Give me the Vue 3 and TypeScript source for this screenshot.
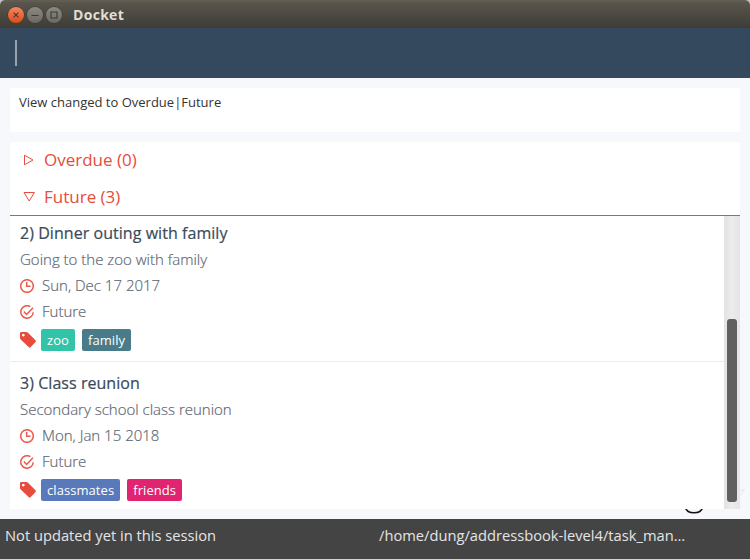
<script setup lang="ts">
interface Tag {
  name: string
  tone: string
}

interface Task {
  index: number
  title: string
  description: string
  date: string
  status: string
  tags: Tag[]
}

const tasks: Task[] = [
  {
    index: 2,
    title: 'Dinner outing with family',
    description: 'Going to the zoo with family',
    date: 'Sun, Dec 17 2017',
    status: 'Future',
    tags: [
      { name: 'zoo', tone: 'teal' },
      { name: 'family', tone: 'slate' },
    ],
  },
  {
    index: 3,
    title: 'Class reunion',
    description: 'Secondary school class reunion',
    date: 'Mon, Jan 15 2018',
    status: 'Future',
    tags: [
      { name: 'classmates', tone: 'blue' },
      { name: 'friends', tone: 'pink' },
    ],
  },
]
</script>

<template>
  <div class="window">
    <header class="titlebar">
      <span class="control close">
        <svg viewBox="0 0 16 16"><path d="M5.6 5.6l4.8 4.8M10.4 5.6l-4.8 4.8" /></svg>
      </span>
      <span class="control">
        <svg viewBox="0 0 16 16"><path d="M4.5 8.5h7" /></svg>
      </span>
      <span class="control">
        <svg viewBox="0 0 16 16"><path d="M5 5h6v6h-6z" /></svg>
      </span>
      <span class="name">Docket</span>
    </header>

    <div class="command"><span class="caret"></span></div>

    <main class="content">
      <svg class="backdrop" viewBox="0 0 65 39">
        <path class="loop" d="M5.5 27.500C7 34.500 21 34.500 22.500 27.500" />
        <path class="leaf" d="M55 11L64.500 9.500L61 14.500L56 15" />
      </svg>

      <section class="message">View changed to Overdue|Future</section>

      <section class="panel">
        <div class="group">
          <svg class="arrow" viewBox="0 0 12 12"><path d="M1.5 1.2v9.600L10 6z" /></svg>
          <span class="overdue">Overdue (0)</span>
        </div>
        <div class="group open">
          <svg class="arrow" viewBox="0 0 12 12"><path d="M1 1.5h10.400L6.200 10z" /></svg>
          <span class="future">Future (3)</span>
        </div>
        <div class="viewport">
          <div class="list">
            <article v-for="task in tasks" :key="task.index" class="task">
              <h2 class="title">{{ task.index }}) {{ task.title }}</h2>
              <p class="line">{{ task.description }}</p>
              <p class="line detail">
                <svg class="icon" viewBox="0 0 14 14">
                  <circle cx="7" cy="7" r="6.3" />
                  <path d="M6.7 3v4.300h3.800" />
                </svg>
                {{ task.date }}
              </p>
              <p class="line detail">
                <svg class="icon" viewBox="0 0 14 14">
                  <path d="M10.300 1.700A6.200 6.200 0 1 0 13.200 7.200M3.800 6.500l2.800 2.900L13 2.700" />
                </svg>
                {{ task.status }}
              </p>
              <div class="tags">
                <svg class="tag-icon" viewBox="0 0 16 16">
                  <path
                    fill-rule="evenodd"
                    d="M0 1.2Q0 0 1.200 0H6.200Q7.200 0 8 .8L15.500 8.300Q16.300 9.100 15.500 9.900L10.500 15.300Q9.700 16.100 8.900 15.300L1 7.800Q0 6.900 0 6zM3.300 1.700a1.400 1.400 0 1 0 .01 0z"
                  />
                </svg>
                <span v-for="tag in task.tags" :key="tag.name" class="tag" :class="tag.tone">{{ tag.name }}</span>
              </div>
            </article>
          </div>
          <div class="track"><div class="thumb"></div></div>
        </div>
      </section>
    </main>

    <footer class="status">
      <span class="sync">Not updated yet in this session</span>
      <span class="path">/home/dung/addressbook-level4/task_man...</span>
    </footer>
  </div>
</template>

<style>
body {
  margin: 0;
  background: #c4c4c4;
  overflow: hidden;
}
</style>

<style scoped>
.window {
  display: flex;
  flex-direction: column;
  width: 750px;
  height: 559px;
  overflow: hidden;
  border-radius: 5px 5px 0 0;
  background: #f7f8fb;
  font-family: 'Open Sans', 'Noto Sans', sans-serif;
  font-size: 16px;
}
.titlebar {
  box-sizing: border-box;
  flex: none;
  display: flex;
  align-items: center;
  gap: 3px;
  height: 28px;
  padding: 1px 8px 0 7.5px;
  background: linear-gradient(#5a564d 0, #68645a 1px, #5a564d 2px, #3d3c37 28px);
}
.control {
  width: 16px;
  height: 16px;
  border-radius: 50%;
  background: linear-gradient(#8c8981, #6b6962);
  box-shadow: 0 0 0 0.5px #35342f;
}
.control.close {
  background: linear-gradient(#f58660, #df4a17);
}
.control svg {
  display: block;
  width: 16px;
  height: 16px;
  fill: none;
  stroke: #3b3a35;
  stroke-width: 1.1;
}
.name {
  margin-left: 8.5px;
  color: #e1ddd4;
  font-size: 14px;
  font-weight: 700;
  letter-spacing: 0.3px;
  line-height: 20px;
}
.command {
  box-sizing: border-box;
  flex: none;
  height: 50px;
  padding: 12px 15px;
  background: #34495e;
}
.caret {
  display: block;
  width: 2px;
  height: 26px;
  background: #97a2ad;
}
.content {
  position: relative;
  box-sizing: border-box;
  flex: none;
  display: flex;
  flex-direction: column;
  gap: 10px;
  height: 441px;
  padding: 10px;
}
.message {
  box-sizing: border-box;
  height: 44px;
  padding: 5px 9px;
  border-radius: 3px;
  background: #fff;
  color: #333;
  font-size: 13px;
  line-height: 19px;
}
.panel {
  position: relative;
  display: flex;
  flex-direction: column;
  height: 367px;
  border-radius: 3px 3px 0 0;
  background: #fff;
}
.group {
  box-sizing: border-box;
  flex: none;
  display: flex;
  align-items: center;
  gap: 9px;
  height: 36px;
  padding-left: 13px;
  color: #e74c3c;
  font-size: 17px;
  line-height: 24px;
}
.group.open {
  height: 38px;
  border-bottom: 1px solid #e74c3c;
}
.arrow {
  width: 12px;
  height: 12px;
  fill: none;
  stroke: #e74c3c;
  stroke-width: 1;
}
.viewport {
  flex: 1;
  display: flex;
  min-height: 0;
  overflow: hidden;
}
.list {
  flex: 1;
}
.task {
  box-sizing: border-box;
  height: 146px;
  padding: 4px 10px 0;
  border-bottom: 1px solid #ebedef;
}
.task + .task {
  padding-top: 8px;
  border-bottom: 0;
}
.title {
  margin: 0;
  color: #3b4a59;
  font-size: 16px;
  font-weight: 400;
  letter-spacing: 0.05px;
  line-height: 26px;
  -webkit-text-stroke: 0.2px #3b4a59;
}
.line {
  margin: 0;
  color: #5f6875;
  font-size: 15px;
  font-weight: 300;
  line-height: 26px;
  -webkit-text-stroke: 0.2px #5f6875;
}
.detail {
  display: flex;
  align-items: center;
  gap: 8px;
}
.icon {
  width: 14px;
  height: 14px;
  margin-top: 1px;
  fill: none;
  stroke: #e95b4d;
  stroke-width: 1.5;
}
.tags {
  display: flex;
  align-items: center;
  padding-top: 5px;
}
.tag-icon {
  width: 16px;
  height: 16px;
  margin-right: 5px;
  fill: #e74c3c;
}
.tag {
  height: 22px;
  margin-right: 7px;
  padding: 0 6px;
  border-radius: 2px;
  color: #fff;
  font-size: 13px;
  letter-spacing: 0.07px;
  line-height: 22px;
}
.teal {
  background: #31c4a8;
}
.slate {
  background: #497c88;
}
.blue {
  background: #587abb;
}
.pink {
  background: #e0246f;
}
.track {
  box-sizing: border-box;
  width: 16px;
  padding: 103px 3px 7px;
  background: linear-gradient(90deg, #e2e2e2, #ececec 50%, #e4e4e4);
}
.thumb {
  height: 100%;
  border-radius: 3px;
  background: #606060;
}
.backdrop {
  position: absolute;
  left: 680px;
  bottom: 0;
  width: 65px;
  height: 39px;
  fill: none;
}
.loop {
  stroke: #111;
  stroke-width: 1.7;
}
.leaf {
  stroke: #e5e6e9;
  stroke-width: 1;
}
.status {
  flex: none;
  display: flex;
  height: 40px;
  background: #444;
  color: #e4e4e4;
  font-size: 14.7px;
  line-height: 33px;
}
.sync {
  box-sizing: border-box;
  width: 379px;
  padding-left: 5px;
}
</style>
